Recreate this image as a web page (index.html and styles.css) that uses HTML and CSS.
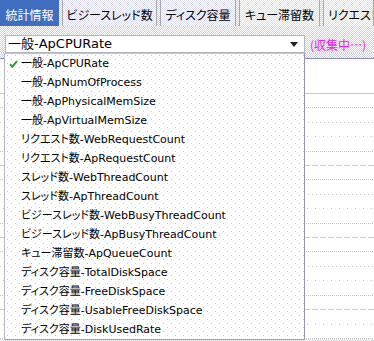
FILE: index.html
```html
<!DOCTYPE html>
<html lang="ja">
<head>
<meta charset="utf-8">
<link rel="stylesheet" href="styles.css">
</head>
<body>
<div class="tabs">
  <div class="tab active t1">統計情報</div>
  <div class="tab t2">ビジースレッド数</div>
  <div class="tab t3">ディスク容量</div>
  <div class="tab t4">キュー滞留数</div>
  <div class="tab t5">リクエスト数</div>
</div>
<div class="toolbar">
  <div class="select"><span class="sel-text">一般-ApCPURate</span><i class="arrow"></i></div>
  <span class="status">(収集中…)</span>
</div>
<div class="panel">
  <div class="band"></div>
  <div class="head"></div>
  <div class="row h14 d"></div>
  <div class="row h15 m"></div>
  <div class="row h14 s"></div>
  <div class="row h15 d"></div>
  <div class="row h14 x"></div>
  <div class="row h14 d"></div>
  <div class="row h15 m"></div>
  <div class="row h14 s"></div>
  <div class="row h15 d"></div>
  <div class="row h14 x"></div>
  <div class="row h14 d"></div>
  <div class="row h15 m"></div>
  <div class="row h14 s"></div>
  <div class="row h15 d"></div>
  <div class="row h14 x"></div>
  <div class="row h15 s"></div>
  <div class="row h14 d"></div>
</div>
<ul class="menu">
  <li class="item checked"><svg class="check" width="9" height="8" viewBox="0 0 9 8"><path d="M1 4.2 L3.4 6.6 L8 1.2" fill="none" stroke="#2e9a2e" stroke-width="2"/></svg>一般-ApCPURate</li>
  <li class="item">一般-ApNumOfProcess</li>
  <li class="item">一般-ApPhysicalMemSize</li>
  <li class="item">一般-ApVirtualMemSize</li>
  <li class="item">リクエスト数-WebRequestCount</li>
  <li class="item">リクエスト数-ApRequestCount</li>
  <li class="item">スレッド数-WebThreadCount</li>
  <li class="item">スレッド数-ApThreadCount</li>
  <li class="item">ビジースレッド数-WebBusyThreadCount</li>
  <li class="item">ビジースレッド数-ApBusyThreadCount</li>
  <li class="item">キュー滞留数-ApQueueCount</li>
  <li class="item">ディスク容量-TotalDiskSpace</li>
  <li class="item">ディスク容量-FreeDiskSpace</li>
  <li class="item">ディスク容量-UsableFreeDiskSpace</li>
  <li class="item">ディスク容量-DiskUsedRate</li>
</ul>
</body>
</html>
```
FILE: styles.css
```css
html, body {
  margin: 0;
  padding: 0;
}
body {
  width: 374px;
  height: 341px;
  overflow: hidden;
  position: relative;
  background-color: #fff;
  background-image: conic-gradient(#cfcfea 25%, #fff 0 50%, #cfcfea 0 75%, #fff 0);
  background-size: 2px 2px;
  font-family: "DejaVu Sans", "Noto Sans CJK JP", sans-serif;
  font-feature-settings: "palt";
  color: #000;
}

.tabs {
  display: flex;
  gap: 3px;
  height: 26px;
}
.tab {
  box-sizing: border-box;
  height: 26px;
  flex: none;
  display: flex;
  align-items: center;
  justify-content: center;
  padding-top: 3px;
  font-family: "Noto Sans CJK JP", sans-serif;
  font-size: 12px;
  font-feature-settings: "palt";
  border-left: 1px solid #a8a8b8;
  border-right: 1px solid #a8a8b8;
  background-color: #fff;
  background-image: conic-gradient(#dcdcf2 25%, #fff 0 50%, #dcdcf2 0 75%, #fff 0);
  background-size: 2px 2px;
  white-space: nowrap;
  overflow: hidden;
}
.tab.active {
  background: #3f6dbf;
  color: #fff;
  border-color: #3f6dbf;
}
.t1 { width: 59px; }
.t2 { width: 95px; }
.t3 { width: 76px; }
.t4 { width: 81px; }
.t5 { flex: 1; justify-content: flex-start; padding-left: 4px; }

.toolbar {
  display: flex;
  align-items: center;
  margin-top: 9px;
  height: 18px;
}
.select {
  box-sizing: border-box;
  margin-left: 5px;
  width: 300px;
  height: 18px;
  background: #fff;
  border: 1px solid #b4b8c4;
  display: flex;
  align-items: center;
  padding-left: 2px;
  padding-right: 6px;
}
.sel-text {
  flex: 1;
  font-size: 13px;
  line-height: 16px;
}
.arrow {
  width: 0;
  height: 0;
  border-left: 4.5px solid transparent;
  border-right: 4.5px solid transparent;
  border-top: 5px solid #222;
}
.status {
  margin-left: 5px;
  font-family: "Noto Sans CJK JP", sans-serif;
  font-size: 12px;
  color: #f020f0;
}

.panel {
  background: #fff;
}
.band {
  height: 5px;
  background-color: #fff;
  background-image: conic-gradient(#cfcfea 25%, #fff 0 50%, #cfcfea 0 75%, #fff 0);
  background-size: 2px 2px;
  border-bottom: 1px solid #8c8cb4;
}
.head {
  height: 34px;
  border-bottom: 1px solid #c8c8c8;
}
.row {
  background-repeat: repeat-x;
  background-position: left bottom;
}
.h14 { height: 14px; }
.h15 { height: 15px; }
.d {
  background-image: linear-gradient(to right, #c4c4c4 1px, transparent 1px);
  background-size: 2px 1px;
}
.m {
  background-image: linear-gradient(to right, #c4c4c4 1px, transparent 1px);
  background-size: 4px 1px;
}
.s {
  background-image: linear-gradient(to right, #c4c4c4 1px, transparent 1px);
  background-size: 8px 1px;
  background-position: 3px bottom;
}
.x {
  background-image: linear-gradient(to right, #cacaca 6px, transparent 6px);
  background-size: 8px 1px;
}

.menu {
  position: absolute;
  left: 4px;
  top: 53px;
  width: 299px;
  margin: 0;
  padding: 0;
  list-style: none;
  border: 1px solid;
  border-color: #c0c0d4 #9494b4 #a0a0a0 #b4b4d0;
  background-color: #fff;
  background-image:
    conic-gradient(at 1px 1px, transparent 75%, #c8c8c8 0),
    conic-gradient(at 1px 1px, transparent 75%, #c8c8c8 0);
  background-size: 8px 8px, 8px 8px;
  background-position: 2px 1px, 6px 5px;
}
.item {
  position: relative;
  height: 19px;
  line-height: 19px;
  padding-left: 16px;
  font-size: 11px;
  white-space: nowrap;
}
.check {
  position: absolute;
  left: 4px;
  top: 6px;
}
```
